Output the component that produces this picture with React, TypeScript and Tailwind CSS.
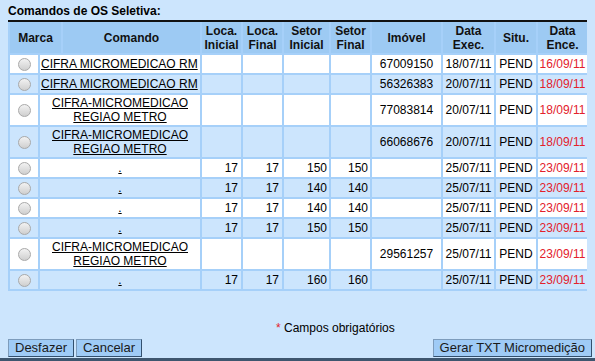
import React from 'react';

interface Comando {
  nome: string;
  duasLinhas?: boolean;
  locaIni?: string;
  locaFim?: string;
  setorIni?: string;
  setorFim?: string;
  imovel?: string;
  exec: string;
  situ: string;
  ence: string;
}

const comandos: Comando[] = [
  { nome: 'CIFRA MICROMEDICAO RM', imovel: '67009150', exec: '18/07/11', situ: 'PEND', ence: '16/09/11' },
  { nome: 'CIFRA MICROMEDICAO RM', imovel: '56326383', exec: '20/07/11', situ: 'PEND', ence: '18/09/11' },
  { nome: 'CIFRA-MICROMEDICAO REGIAO METRO', duasLinhas: true, imovel: '77083814', exec: '20/07/11', situ: 'PEND', ence: '18/09/11' },
  { nome: 'CIFRA-MICROMEDICAO REGIAO METRO', duasLinhas: true, imovel: '66068676', exec: '20/07/11', situ: 'PEND', ence: '18/09/11' },
  { nome: '.', locaIni: '17', locaFim: '17', setorIni: '150', setorFim: '150', exec: '25/07/11', situ: 'PEND', ence: '23/09/11' },
  { nome: '.', locaIni: '17', locaFim: '17', setorIni: '140', setorFim: '140', exec: '25/07/11', situ: 'PEND', ence: '23/09/11' },
  { nome: '.', locaIni: '17', locaFim: '17', setorIni: '140', setorFim: '140', exec: '25/07/11', situ: 'PEND', ence: '23/09/11' },
  { nome: '.', locaIni: '17', locaFim: '17', setorIni: '150', setorFim: '150', exec: '25/07/11', situ: 'PEND', ence: '23/09/11' },
  { nome: 'CIFRA-MICROMEDICAO REGIAO METRO', duasLinhas: true, imovel: '29561257', exec: '25/07/11', situ: 'PEND', ence: '23/09/11' },
  { nome: '.', locaIni: '17', locaFim: '17', setorIni: '160', setorFim: '160', exec: '25/07/11', situ: 'PEND', ence: '23/09/11' },
];

const headers = [
  ['Marca'],
  ['Comando'],
  ['Loca.', 'Inicial'],
  ['Loca.', 'Final'],
  ['Setor', 'Inicial'],
  ['Setor', 'Final'],
  ['Imóvel'],
  ['Data', 'Exec.'],
  ['Situ.'],
  ['Data', 'Ence.'],
];

function Radio() {
  return (
    <span className="block w-[13px] h-[13px] rounded-full border border-[#a9a9a9] bg-gradient-to-b from-[#f2f2f2] to-[#cfcfcf]" />
  );
}

function Botao({ children }: { children: React.ReactNode }) {
  return (
    <button className="h-[18px] px-[6px] bg-[#9fcbf6] border border-[#7d9cbc] border-r-[#33506e] border-b-[#33506e] text-[13px] leading-[16px] text-[#1a1a1a]">
      {children}
    </button>
  );
}

export default function App() {
  return (
    <div
      className="w-[595px] h-[361px] bg-[#cce5fd] flex flex-col text-[12px] text-black"
      style={{ fontFamily: '"Liberation Sans", Arial, sans-serif' }}
    >
      <div className="px-[8px] pt-[4px] h-[20px] font-bold leading-[14px]">Comandos de OS Seletiva:</div>

      <div className="mx-[8px] border-t-2 border-[#111] bg-[#a6d0f9]">
        {/* cabeçalho: a coluna Marca é mais larga que nas linhas */}
        <div className="grid grid-cols-[51px_137px_39px_39px_45px_39px_69px_51px_40px_49px] gap-[2px] px-[2px] pb-[2px]">
          {headers.map((h, i) => (
            <div
              key={i}
              className="h-[31px] bg-[#9dcaf3] font-bold leading-[14px] flex flex-col items-center justify-center text-center text-[#111]"
            >
              {h.map((l) => (
                <span key={l}>{l}</span>
              ))}
            </div>
          ))}
        </div>

        <div className="grid grid-cols-[28px_160px_39px_39px_45px_39px_69px_51px_40px_49px] gap-[2px] px-[2px] pb-[2px]">
          {comandos.map((c, i) => {
            const bg = i % 2 === 0 ? 'bg-white' : 'bg-[#cce5fd]';
            const h = c.duasLinhas ? 'h-[30px]' : 'h-[18px]';
            const cell = `${bg} ${h} flex items-center leading-[14px]`;
            return (
              <React.Fragment key={i}>
                <div className={`${cell} justify-center`}>
                  <Radio />
                </div>
                <div className={`${cell} ${c.duasLinhas || c.nome === '.' ? 'justify-center text-center' : 'justify-start pl-[1px]'}`}>
                  {c.duasLinhas ? (
                    <span className="underline">
                      CIFRA-MICROMEDICAO
                      <br />
                      REGIAO METRO
                    </span>
                  ) : (
                    <span className="underline">{c.nome}</span>
                  )}
                </div>
                <div className={`${cell} justify-end pr-[3px]`}>{c.locaIni}</div>
                <div className={`${cell} justify-end pr-[3px]`}>{c.locaFim}</div>
                <div className={`${cell} justify-end pr-[2px]`}>{c.setorIni}</div>
                <div className={`${cell} justify-end pr-[2px]`}>{c.setorFim}</div>
                <div className={`${cell} justify-center`}>{c.imovel}</div>
                <div className={`${cell} justify-center`}>{c.exec}</div>
                <div className={`${cell} justify-center`}>{c.situ}</div>
                <div className={`${cell} justify-center text-[#e3212b]`}>{c.ence}</div>
              </React.Fragment>
            );
          })}
        </div>
      </div>

      <div className="mt-[30px] pl-[276px] leading-[14px]">
        <span className="text-[#e3212b]">*</span> Campos obrigatórios
      </div>

      <div className="mt-[4px] flex px-[8px] pr-[3px] gap-[2px]">
        <Botao>Desfazer</Botao>
        <Botao>Cancelar</Botao>
        <div className="flex-1" />
        <Botao>Gerar TXT Micromedição</Botao>
      </div>

      <div className="mt-auto h-[3px] bg-[#3e566f]" />
    </div>
  );
}
